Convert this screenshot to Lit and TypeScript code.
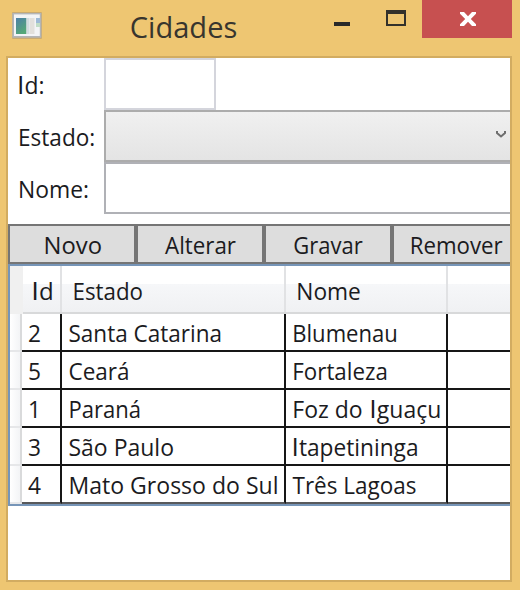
import { LitElement, html, css, svg } from "lit";
import { customElement } from "lit/decorators.js";

interface Label {
  text: string;
  /** left inset inside the parent box */
  x: number;
  /** advance width of the whole run */
  w: number;
}

const l = (text: string, x: number, w: number): Label => ({ text, x, w });

/** Capital I is set in a face that draws it as a plain bar. */
const glyphRuns = (text: string) =>
  text
    .split(/(I)/)
    .filter(Boolean)
    .map((p, i) =>
      p === "I"
        ? svg`<tspan class="bar" dx=${i ? 1.2 : 0}>I</tspan>`
        : svg`<tspan dx=${i ? 0.6 : 0}>${p}</tspan>`
    );

const label = (t: Label, baseline: number, cls = "txt") => html`
  <svg class="label" width="100%" height="24">
    ${svg`<text class=${cls} x=${t.x} y=${baseline} textLength=${t.w} lengthAdjust="spacingAndGlyphs">${
      t.text.includes("I") ? glyphRuns(t.text) : t.text
    }</text>`}
  </svg>
`;

const buttons: Label[] = [
  l("Novo", 33.5, 58.5),
  l("Alterar", 27, 71),
  l("Gravar", 27.3, 69.5),
  l("Remover", 15.7, 93),
];

const headers: Label[] = [l("Id", 9.8, 22), l("Estado", 10.5, 70.5), l("Nome", 10.3, 64.5)];

const rows: Label[][] = [
  [l("2", 6, 13), l("Santa Catarina", 6.5, 153.5), l("Blumenau", 6.3, 105.5)],
  [l("5", 6, 13), l("Ceará", 6.5, 61), l("Fortaleza", 6.3, 95.5)],
  [l("1", 6, 13), l("Paraná", 6.5, 72.5), l("Foz do Iguaçu", 6.3, 149)],
  [l("3", 6, 13), l("São Paulo", 6.5, 105.5), l("Itapetininga", 6, 126.5)],
  [l("4", 6, 13), l("Mato Grosso do Sul", 6.5, 210), l("Três Lagoas", 6.5, 124)],
];

@customElement("app-root")
export class AppRoot extends LitElement {
  static styles = css`
    :host {
      display: block;
      width: 520px;
      height: 590px;
      overflow: hidden;
      background: #eec672;
      font-family: "Open Sans", "Noto Sans", sans-serif;
    }
    * { box-sizing: border-box; }
    svg { display: block; }
    .label { overflow: visible; }
    .txt { font-size: 24.3px; fill: #1b1b1e; }
    .caption { font-size: 28.6px; fill: #38352e; }
    .bar { font-family: Lato, sans-serif; }

    .titlebar {
      display: grid;
      grid-template-columns: 11px 31px 87px 193px 28px 36px 36px 90px;
      height: 56px;
      align-items: start;
    }
    .appicon { grid-column: 2; margin-top: 11px; }
    .title { grid-column: 4; height: 56px; }
    .min { grid-column: 5; width: 16px; height: 4px; margin: 22px 0 0 12px; background: #292929; }
    .max {
      grid-column: 7;
      width: 20px;
      height: 16px;
      margin-top: 10px;
      border: 2px solid #33312b;
      border-top-width: 4px;
    }
    .close {
      grid-column: 8;
      height: 38px;
      padding: 12px 0 0 38px;
      background: #c75050;
    }

    .client {
      width: 506px;
      height: 526px;
      margin-left: 6px;
      border: 2px solid #d2ac61;
      background: #fff;
      overflow: hidden;
    }
    .form { display: grid; grid-template-columns: 96px 406px; grid-template-rows: 52px 52px 52px; }
    .id { width: 112px; border: 2px solid #d4d5dc; }
    .combo {
      display: flex;
      justify-content: flex-end;
      border: 2px solid #acacac;
      border-right: 0;
      background: linear-gradient(#f0f0f0, #e4e4e4);
    }
    .combo svg { margin: 18px 4px 0 0; }
    .nome { border: 2px solid #b0b1b6; border-right: 0; }

    .buttons { display: flex; height: 40px; margin-top: 10px; }
    .btn { flex: 0 0 128px; height: 40px; border: 2px solid #757575; background: #ddd; }

    .grid { height: 242px; border: 2px solid #7695b8; border-right: 0; }
    .row {
      display: grid;
      grid-template-columns: 12px 40px 224px 162px 62px;
      grid-template-rows: 38px;
      height: 38px;
    }
    .row.head {
      grid-template-rows: 46px;
      height: 48px;
      border-bottom: 2px solid #d8d9da;
      background: linear-gradient(#fff 0 18px, #f6f7f9 18px, #f0f1f3 46px);
    }
    .corner { width: 13px; height: 48px; background: #f0f0f0; }
    .sep { border-right: 2px solid #e1e2e4; }
    .cell { border-right: 2px solid #161616; border-bottom: 2px solid #161616; }
    .row .cell:last-child { border-right: 0; }
    .rowhead {
      border-right: 2px solid #d9dadb;
      border-bottom: 2px solid #e6e7e9;
      background: linear-gradient(90deg, #fff, #f3f4f6);
    }
    .row:last-child .cell { border-bottom-color: #58595b; }
  `;

  render() {
    return html`
      <div class="titlebar">
        <svg class="appicon" width="31" height="28" viewBox="0 0 31 28">
          <defs>
            <linearGradient id="pane" x1="0" y1="0" x2="0.5" y2="1">
              <stop offset="0" stop-color="#4c7fa8" />
              <stop offset="1" stop-color="#55a878" />
            </linearGradient>
          </defs>
          <rect x="1" y="1" width="30" height="27" rx="1" fill="#c9ab72" />
          <rect x="1.3" y="2" width="29" height="24.7" fill="#b3b5b8" />
          <rect x="3" y="3.4" width="25.8" height="21.6" fill="#f3f4f6" />
          <rect x="5" y="7" width="10.5" height="16" fill="url(#pane)" />
          <rect x="15.5" y="7" width="3" height="16" fill="#d3dce0" />
          <rect x="19" y="7" width="4.5" height="16" fill="#e2e0dc" />
          <rect x="25" y="7" width="4" height="5" fill="#9db9d6" />
          <rect x="25" y="12" width="4" height="4" fill="#c0dcc6" />
        </svg>
        <div class="title">${label(l("Cidades", 0.8, 107.5), 37.5, "caption")}</div>
        <div class="min"></div>
        <div class="max"></div>
        <div class="close">
          <svg width="16" height="14" viewBox="0 0 16 14">
            <path d="M0 0H4L8 4.2 12 0H16V1.8L10.8 7 16 12.2V14H12L8 9.8 4 14H0V12.2L5.2 7 0 1.8Z" fill="#fff" />
          </svg>
        </div>
      </div>
      <div class="client">
        <div class="form">
          <div>${label(l("Id:", 9.6, 27), 36)}</div>
          <div class="id"></div>
          <div>${label(l("Estado:", 10, 77.2), 36)}</div>
          <div class="combo">
            <svg width="10" height="10" viewBox="0 0 10 10">
              <path d="M1 1V3L5 6.5 9 3V1" fill="none" stroke="#6e6e6e" stroke-width="2" />
            </svg>
          </div>
          <div>${label(l("Nome:", 10, 71), 36)}</div>
          <div class="nome"></div>
        </div>
        <div class="buttons">
          ${buttons.map((b) => html`<div class="btn">${label(b, 28)}</div>`)}
        </div>
        <div class="grid">
          <div class="row head">
            <div class="corner"></div>
            ${headers.map((h) => html`<div class="sep">${label(h, 34)}</div>`)}
          </div>
          ${rows.map(
            (r) => html`<div class="row">
              <div class="rowhead"></div>
              ${r.map((c) => html`<div class="cell">${label(c, 28)}</div>`)}
              <div class="cell"></div>
            </div>`
          )}
        </div>
      </div>
    `;
  }
}
